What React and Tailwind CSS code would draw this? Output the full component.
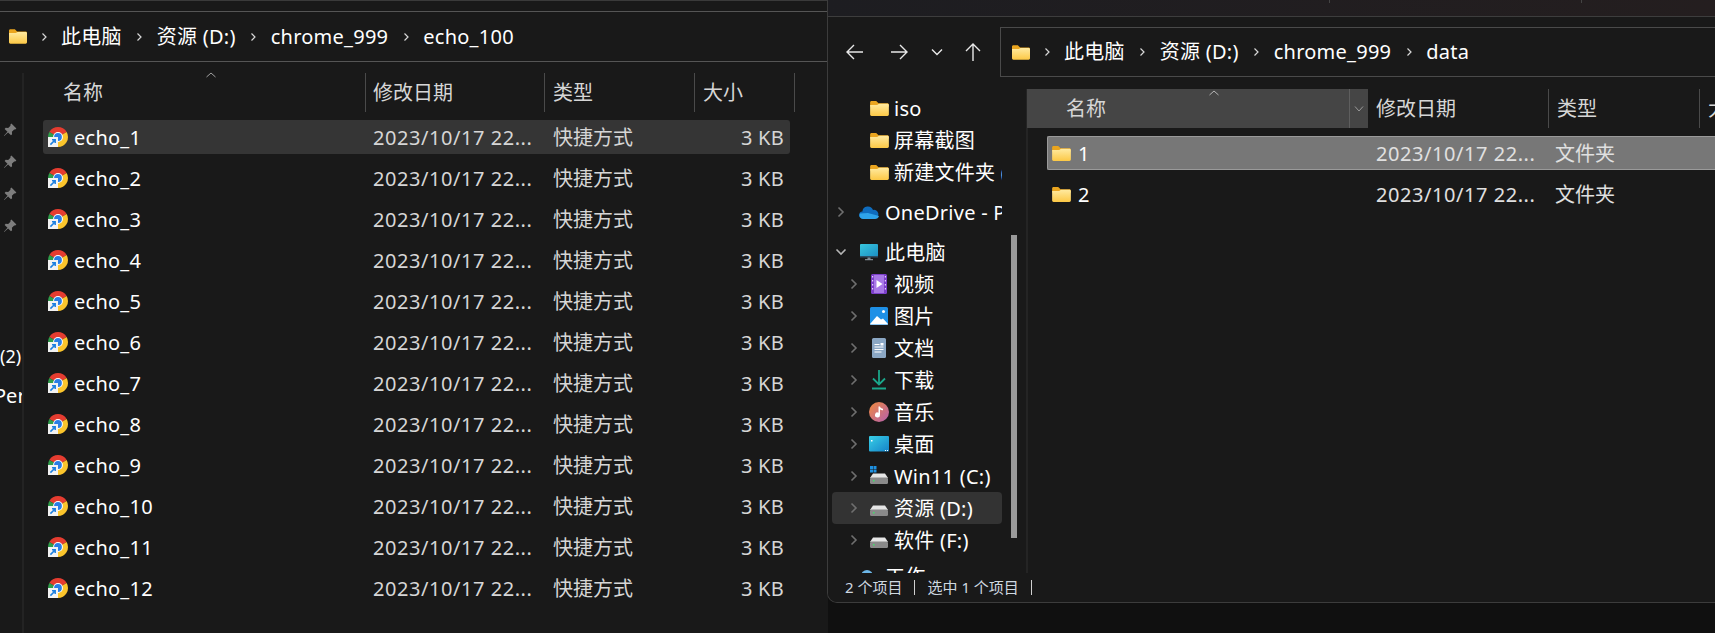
import React from "react";

const font = "font-['Noto_Sans','Noto_Sans_CJK_SC',sans-serif]";
const echoes = ["echo_1","echo_2","echo_3","echo_4","echo_5","echo_6","echo_7","echo_8","echo_9","echo_10","echo_11","echo_12"];

const Folder = ({ className }) => (
  <svg viewBox="0 0 20 16" className={className}>
    <defs>
      <linearGradient id="folderFront" x1="0" y1="0" x2="0" y2="1">
        <stop offset="0" stopColor="#ffeaa0" />
        <stop offset="1" stopColor="#fcc845" />
      </linearGradient>
    </defs>
    <path d="M0 1.5C0 .7.7 0 1.5 0h5L9 2.5h9.5c.8 0 1.5.7 1.5 1.5v2H0z" fill="#eaa51f" />
    <path d="M0 4.2h7.5L9.5 3h9c.8 0 1.5.7 1.5 1.5v10c0 .8-.7 1.5-1.5 1.5h-17C.7 16 0 15.3 0 14.5z" fill="url(#folderFront)" />
  </svg>
);

const Chrome = () => (
  <svg viewBox="0 0 20 20" className="w-5 h-5 shrink-0">
    <path d="M10 10L1.34 5A10 10 0 0 1 18.66 5Z" fill="#e53c30" />
    <path d="M10 10L18.66 5A10 10 0 0 1 10 20Z" fill="#fbc52c" />
    <path d="M10 10L10 20A10 10 0 0 1 1.34 5Z" fill="#2f9e4b" />
    <circle cx="10" cy="10" r="4.9" fill="#fff" />
    <circle cx="10" cy="10" r="3.9" fill="#2a7ee6" />
    <rect x="0" y="10" width="10" height="10" fill="#f2f2f2" />
    <path d="M2.4 17.6L7 13M4 12.8h3.2V16" stroke="#1c7fe0" strokeWidth="1.5" fill="none" />
  </svg>
);

const Pin = () => (
  <svg viewBox="0 0 14 14" className="w-[14px] h-[14px]">
    <path d="M8.4.6l5 5-1.2 1-1-.2-2.3 2.3.2 2.5-1.1 1.1-2.9-2.9L1.2 13l-.3-.3 3.6-3.9L1.6 5.9l1.1-1.1 2.5.2 2.3-2.3-.2-1z" fill="#7d7d7d" />
  </svg>
);

const Sep = () => (
  <svg viewBox="0 0 8 12" className="w-2 h-3 shrink-0">
    <path d="M2.5 2.5L6 6l-3.500 3.500" stroke="#d8d8d8" strokeWidth="1.2" fill="none" />
  </svg>
);

const Crumbs = ({ items }) => (
  <div className="flex items-center text-white text-[20px] tracking-[0.25px] whitespace-nowrap">
    {items.map((t) => (
      <React.Fragment key={t}>
        <div className="w-[35px] flex justify-center"><Sep /></div>
        <span>{t}</span>
      </React.Fragment>
    ))}
  </div>
);

const Chevron = ({ open }) => (
  <svg viewBox="0 0 12 12" className="w-3 h-3">
    <path d={open ? "M1.5 3.5L6 8l4.5-4.5" : "M3.5 1.5L8 6l-4.5 4.5"} stroke={open ? "#b5b5b5" : "#6f6f6f"} strokeWidth="1.6" fill="none" />
  </svg>
);

const ico = "w-5 h-5";
const Cloud = () => (
  <svg viewBox="0 0 20 14" className="w-5 h-[14px]">
    <path d="M4 13.5a3.5 3.5 0 0 1-.6-7A5.5 5.5 0 0 1 14 5a4.3 4.3 0 0 1 2 8.5z" fill="#0f6cbd" />
    <path d="M4 14a3.6 3.6 0 0 1-3-5.5L9 8l11 3c-.5 1.800-2 3-4 3z" fill="#2ea3ea" />
  </svg>
);
const Monitor = () => (
  <svg viewBox="0 0 20 20" className={ico}>
    <defs>
      <linearGradient id="mon" x1="0" y1="0" x2="1" y2="1">
        <stop offset="0" stopColor="#38c7de" />
        <stop offset="1" stopColor="#1c8fc4" />
      </linearGradient>
    </defs>
    <rect x="1" y="2" width="18" height="12.500" rx="1" fill="url(#mon)" />
    <rect x="1" y="14" width="18" height="1.500" fill="#2c4f66" />
    <rect x="8.500" y="15.500" width="3" height="2" fill="#7b8a95" />
    <rect x="6" y="17.200" width="8" height="1" fill="#98a5ae" />
  </svg>
);
const Video = () => (
  <svg viewBox="0 0 20 20" className={ico}>
    <rect x="2" y="0" width="16" height="20" rx="1.500" fill="#7c3fc9" />
    <rect x="5" y="1" width="10" height="18" fill="#a878e6" />
    <path d="M7.500 6v8l6-4z" fill="#fff" />
    <path d="M3 2h1.200v1.500H3zM3 6h1.200v1.500H3zM3 10h1.200v1.500H3zM3 14h1.200v1.500H3zM15.800 2H17v1.500h-1.200zM15.800 6H17v1.500h-1.200zM15.800 10H17v1.500h-1.200zM15.800 14H17v1.500h-1.200z" fill="#e3d3fa" />
  </svg>
);
const Picture = () => (
  <svg viewBox="0 0 20 20" className={ico}>
    <rect x="1" y="1" width="18" height="18" rx="1.500" fill="#1e90e6" />
    <circle cx="14.500" cy="5.500" r="1.500" fill="#fff" />
    <path d="M1 18l7-8 4 3.500 2-1 5 5.500v.5H1z" fill="#fff" />
  </svg>
);
const Doc = () => (
  <svg viewBox="0 0 20 20" className={ico}>
    <rect x="3" y="0" width="14" height="20" rx="1.500" fill="#8ba7c4" />
    <path d="M5.500 6.500h5M5.500 9h9M5.500 11.500h9M5.500 14h7" stroke="#fff" strokeWidth="1" />
    <rect x="11.500" y="5" width="3" height="2.500" fill="#fff" />
  </svg>
);
const Download = () => (
  <svg viewBox="0 0 20 20" className={ico}>
    <path d="M10 0v14M4 8.500l6 6 6-6" stroke="#1aa68a" strokeWidth="1.800" fill="none" />
    <rect x="3" y="17.500" width="14" height="2" fill="#1aa68a" />
  </svg>
);
const Music = () => (
  <svg viewBox="0 0 20 20" className={ico}>
    <defs>
      <linearGradient id="mus" x1="0" y1="0" x2="1" y2="1">
        <stop offset="0" stopColor="#f08a3c" />
        <stop offset="1" stopColor="#b45fb0" />
      </linearGradient>
    </defs>
    <circle cx="10" cy="10" r="10" fill="url(#mus)" />
    <path d="M9.500 4.500h1.500c.3 1.500 1.500 2 3 2.300v1.500c-1.200 0-2.300-.4-3-1V13a2.500 2.500 0 1 1-1.500-2.300z" fill="#fff" />
  </svg>
);
const Desktop = () => (
  <svg viewBox="0 0 20 16" className="w-5 h-4">
    <defs>
      <linearGradient id="desk" x1="0" y1="0" x2="1" y2="1">
        <stop offset="0" stopColor="#38cfe6" />
        <stop offset="1" stopColor="#1583c9" />
      </linearGradient>
    </defs>
    <rect x="0" y="0" width="20" height="15.500" rx="1" fill="url(#desk)" />
    <rect x="2" y="4" width="1.500" height="1.500" fill="#fff" />
    <rect x="16" y="14" width="1" height="1" fill="#fff" />
    <rect x="18" y="14" width="1" height="1" fill="#fff" />
  </svg>
);
const Drive = ({ win }) => (
  <svg viewBox="0 0 20 20" className={ico}>
    {win && <path d="M1 0h3v3H1zM4.500 0h3v3h-3zM1 3.500h3v3H1zM4.500 3.500h3v3h-3z" fill="#1e90e0" />}
    <path d="M4 7.500h12l3 4.500H1z" fill="#e6e6e6" />
    <rect x="1" y="11.500" width="18" height="6.500" rx="1.500" fill="#8a8a8a" />
    <rect x="4" y="14" width="1.500" height="1.500" fill="#41e06a" />
  </svg>
);
const Network = () => (
  <svg viewBox="0 0 20 20" className={ico}>
    <circle cx="8" cy="10" r="6" fill="#6db7e8" />
  </svg>
);
const SmallFolder = () => <Folder className="w-[19px] h-[15px]" />;

const nav = [
  { label: "iso", depth: 1, icon: <SmallFolder />, bare: true },
  { label: "屏幕截图", depth: 1, icon: <SmallFolder />, bare: true },
  { label: "新建文件夹 (2)", depth: 1, icon: <SmallFolder />, bare: true },
  { label: "OneDrive - Personal", depth: 0, icon: <Cloud />, gap: "mt-[8px]" },
  { label: "此电脑", depth: 0, icon: <Monitor />, open: true, gap: "mt-[8px]" },
  { label: "视频", depth: 1, icon: <Video /> },
  { label: "图片", depth: 1, icon: <Picture /> },
  { label: "文档", depth: 1, icon: <Doc /> },
  { label: "下载", depth: 1, icon: <Download /> },
  { label: "音乐", depth: 1, icon: <Music /> },
  { label: "桌面", depth: 1, icon: <Desktop /> },
  { label: "Win11 (C:)", depth: 1, icon: <Drive win /> },
  { label: "资源 (D:)", depth: 1, icon: <Drive />, active: true },
  { label: "软件 (F:)", depth: 1, icon: <Drive /> },
  { label: "工作", depth: 0, icon: <Network />, gap: "mt-[4px]", bare: true },
];

const NavRow = ({ item }) => (
  <div className={`flex items-center shrink-0 h-[32px] w-[170px] overflow-hidden rounded whitespace-nowrap text-white text-[20px] tracking-[0.25px] ${item.gap || ""} ${item.active ? "bg-[#333333]" : ""} ${item.depth ? "pl-[16px]" : "pl-[3px]"}`}>
    <div className="w-3 shrink-0">{!item.bare && <Chevron open={item.open} />}</div>
    <div className={`w-5 flex justify-center shrink-0 ${item.depth ? "ml-[9px]" : "ml-[12px]"}`}>{item.icon}</div>
    <span className={`pt-[1px] ${item.depth ? "ml-[5px]" : "ml-[6px]"}`}>{item.label}</span>
  </div>
);

const HeaderCell = ({ label, width, pad = "pl-[8px]" }) => (
  <div className={`${width} h-full shrink-0 flex items-center border-r border-[#4a4a4a] ${pad} text-[20px] text-[#d6d6d6]`}>{label}</div>
);

const App = () => {
  return (
    <div className={`relative w-[1715px] h-[633px] overflow-hidden bg-[#101010] ${font}`}>
      {/* back window */}
      <div className="absolute left-0 top-0 w-[828px] h-[633px] bg-[#191919] flex flex-col">
        <div className="h-[12px] border-t border-[#3a3a3a] border-b border-b-[#555555] shrink-0" />
        <div className="h-[50px] shrink-0 border-b border-[#555555] flex items-center pl-[9px]">
          <Folder className="w-[18px] h-[15px] shrink-0 -mr-[1px]" />
          <Crumbs items={["此电脑", "资源 (D:)", "chrome_999", "echo_100"]} />
        </div>
        <div className="flex flex-1 min-h-0">
          <div className="relative w-[24px] shrink-0 border-r-2 border-[#232323] mt-[11px] text-white whitespace-nowrap overflow-hidden">
            <div className="flex flex-col pl-[3px] pt-[41px]">
              {[0, 1, 2, 3].map((i) => (
                <div key={i} className="h-[32px] flex items-center"><Pin /></div>
              ))}
            </div>
            <div className="pl-0 mt-[100px] h-[28px] flex items-center text-[18px]">(2)</div>
            <div className="-ml-[6px] mt-[12px] h-[28px] flex items-center text-[20px]">Per</div>
          </div>
          <div className="flex-1 min-w-0 relative">
            <div className="flex h-[39px] mt-[11px] relative">
              <svg viewBox="0 0 12 6" className="absolute left-[181px] -top-[1px] w-3 h-[6px]">
                <path d="M1.500 5L6 1l4.500 4" stroke="#a0a0a0" fill="none" />
              </svg>
              <HeaderCell label="名称" width="w-[342px]" pad="pl-[39px]" />
              <HeaderCell label="修改日期" width="w-[179px]" pad="pl-[7px]" />
              <HeaderCell label="类型" width="w-[150px]" />
              <HeaderCell label="大小" width="w-[100px]" />
            </div>
            <div className="flex flex-col pl-[19px] mt-[8px]">
              {echoes.map((name, i) => (
                <div key={name} className={`flex items-center h-[34px] w-[747px] mb-[7px] rounded-[3px] ${i === 0 ? "bg-[#353535]" : ""}`}>
                  <div className="w-[330px] shrink-0 flex items-center gap-[6px] pl-[5px] text-white text-[20px] tracking-[0.25px]">
                    <Chrome />
                    <span className="pt-[2px]">{name}</span>
                  </div>
                  <div className="w-[180px] shrink-0 pt-[2px] text-[20px] tracking-[0.55px] text-[#d6d6d6]">2023/10/17 22...</div>
                  <div className="w-[160px] shrink-0 pt-[2px] text-[20px] text-[#d6d6d6]">快捷方式</div>
                  <div className="flex-1 text-right pt-[2px] pr-[6px] text-[20px] tracking-[0.25px] text-[#d6d6d6]">3 KB</div>
                </div>
              ))}
            </div>
          </div>
        </div>
      </div>

      {/* front window */}
      <div className="absolute left-[827px] top-0 w-[888px] h-[603px] bg-[#191919] border-l border-b border-[#3c3c3c] rounded-bl-[10px] overflow-hidden flex flex-col">
        <div className="relative h-[17px] shrink-0 bg-gradient-to-r from-[#1d1d21] to-[#241e1f] border-b border-[#3d3d3d]">
          <div className="absolute left-[501px] top-0 w-px h-[3px] bg-[#444444]" />
          <div className="absolute left-[753px] top-0 w-px h-[3px] bg-[#444444]" />
        </div>
        <div className="h-[60px] pt-[10px] shrink-0 flex">
          <div className="w-[172px] shrink-0 flex items-center h-[50px] pl-[17px]">
            <svg viewBox="0 0 20 18" className="w-5 h-[18px]"><path d="M18 9H2M9 2L2 9l7 7" stroke="#e8e8e8" strokeWidth="1.400" fill="none" /></svg>
            <svg viewBox="0 0 20 18" className="w-5 h-[18px] ml-[24px]"><path d="M2 9h16M11 2l7 7-7 7" stroke="#e8e8e8" strokeWidth="1.400" fill="none" /></svg>
            <svg viewBox="0 0 12 8" className="w-3 h-2 ml-[22px]"><path d="M1 1.500l5 5 5-5" stroke="#e8e8e8" strokeWidth="1.400" fill="none" /></svg>
            <svg viewBox="0 0 18 20" className="w-[18px] h-5 ml-[21px]"><path d="M9 19V2M2 9l7-7 7 7" stroke="#e8e8e8" strokeWidth="1.400" fill="none" /></svg>
          </div>
          <div className="flex-1 h-[50px] border border-r-0 border-[#4a4a4a] flex items-center pl-[11px]">
            <Folder className="w-[18px] h-[15px] shrink-0 -mr-[1px]" />
            <Crumbs items={["此电脑", "资源 (D:)", "chrome_999", "data"]} />
          </div>
        </div>
        <div className="flex flex-1 min-h-0 mt-[12px]">
          <div className="relative w-[200px] shrink-0 border-r-2 border-[#242424] pl-[4px] overflow-hidden">
            <div className="flex flex-col pt-[3px]">
              {nav.map((item) => (
                <NavRow key={item.label} item={item} />
              ))}
            </div>
            <div className="absolute left-[183px] top-[146px] w-[6px] h-[303px] bg-[#9a9a9a]" />
          </div>
          <div className="flex-1 min-w-0">
            <div className="flex h-[39px]">
              <div className="relative w-[341px] shrink-0 h-full bg-[#454545] flex items-center pl-[39px] text-[20px] text-[#d6d6d6] -ml-[1px]">
                名称
                <svg viewBox="0 0 12 6" className="absolute left-[181px] top-[1px] w-3 h-[6px]">
                  <path d="M1.500 5L6 1l4.500 4" stroke="#b5b5b5" fill="none" />
                </svg>
                <div className="absolute left-[322px] top-0 h-full w-[19px] border-l border-[#5e5e5e] flex items-center justify-center">
                  <svg viewBox="0 0 12 8" className="w-3 h-2"><path d="M2 1.500l4 4.500 4-4.500" stroke="#9a9a9a" fill="none" /></svg>
                </div>
              </div>
              <HeaderCell label="修改日期" width="w-[181px]" />
              <HeaderCell label="类型" width="w-[151px]" />
              <div className="flex-1 pl-[8px] flex items-center text-[20px] text-[#d6d6d6] whitespace-nowrap overflow-hidden">大小</div>
            </div>
            <div className="flex flex-col pl-[19px] mt-[8px]">
              {["1", "2"].map((name, i) => (
                <div key={name} className={`flex items-center h-[34px] mb-[7px] rounded-l-[2px] border border-r-0 ${i === 0 ? "bg-[#777777] border-[#9a9a9a]" : "border-transparent"}`}>
                  <div className="w-[328px] shrink-0 flex items-center pl-[4px] gap-[7px] text-white text-[20px]">
                    <Folder className="w-[19px] h-[15px]" />
                    <span className="pt-[2px]">{name}</span>
                  </div>
                  <div className="w-[179px] shrink-0 pt-[2px] text-[20px] tracking-[0.55px] text-[#e0e0e0]">2023/10/17 22...</div>
                  <div className="flex-1 pt-[2px] text-[20px] text-[#e0e0e0]">文件夹</div>
                </div>
              ))}
            </div>
          </div>
        </div>
        <div className="h-[29px] shrink-0 bg-[#191919] flex items-center pl-[17px] text-[15px] text-[#cfd8e0]">
          <span>2 个项目</span>
          <span className="w-px h-[15px] bg-[#d0d0d0] mx-[12px]" />
          <span>选中 1 个项目</span>
          <span className="w-px h-[15px] bg-[#d0d0d0] mx-[12px]" />
        </div>
      </div>
    </div>
  );
};

export default App;
